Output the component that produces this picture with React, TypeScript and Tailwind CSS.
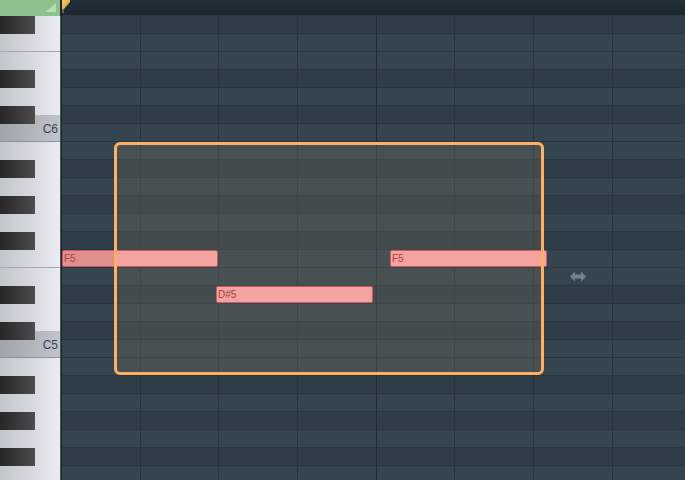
const ROWS = [
  'F#6', 'F6', 'E6', 'D#6', 'D6', 'C#6', 'C6', 'B5', 'A#5', 'A5', 'G#5', 'G5', 'F#5',
  'F5', 'E5', 'D#5', 'D5', 'C#5', 'C5', 'B4', 'A#4', 'A4', 'G#4', 'G4', 'F#4', 'F4',
]

const BEATS = [0, 1, 2, 3, 4, 5, 6, 7]

interface Note {
  name: string
  left: number
  top: number
  width: number
  bg: string
}

// grid origin is x=62, y=16 on the page
const NOTES: Note[] = [
  { name: 'F5', left: 0, top: 234, width: 156, bg: 'bg-[linear-gradient(to_right,#e08f8e_52px,#f5a3a0_52px)]' },
  { name: 'D#5', left: 154, top: 270, width: 157, bg: 'bg-[#f5a3a0]' },
  { name: 'F5', left: 328, top: 234, width: 157, bg: 'bg-[#f5a3a0]' },
]

function PianoKey({ name }: { name: string }) {
  const black = name.includes('#')
  const isC = name[0] === 'C' && !black
  const isCSharp = name.startsWith('C#')
  const isF = name[0] === 'F' && !black

  if (black) {
    return (
      <div className="flex h-[18px]">
        <div className="w-[35px] bg-linear-to-r from-[#262626] to-[#4d4d4f]" />
        <div className="flex flex-1 flex-col">
          <div className="flex-1" />
          <div className={isCSharp ? 'flex-1 bg-[rgba(30,35,45,0.2)]' : 'flex-1'} />
        </div>
      </div>
    )
  }

  return (
    <div
      className={`flex h-[18px] items-start ${
        isC ? 'border-b border-[#8d929a] bg-[rgba(30,35,45,0.2)]' : ''
      } ${isF ? 'border-b border-[#a4a9b1]' : ''}`}
    >
      {isC && (
        <span className="ml-auto -mt-[1px] pr-[2px] text-[12px] leading-none text-[#34455a]">
          {name}
        </span>
      )}
    </div>
  )
}

function GridRow({ name }: { name: string }) {
  const black = name.includes('#')
  return (
    <div
      className={`h-[18px] border-b border-[#28353d] ${
        black ? 'bg-[#2e3d47]' : 'bg-[#34454f]'
      }`}
    />
  )
}

export default function App() {
  return (
    <div className="flex h-[480px] w-[685px] flex-col overflow-hidden bg-[#2e3d47] font-['Liberation_Sans',Arial,sans-serif]">
      {/* top bar */}
      <div className="flex h-[16px] shrink-0">
        <div className="flex w-[60px] items-start justify-end bg-[#8cc18e] pr-[4px] pt-[3px]">
          <svg width="11" height="9" viewBox="0 0 11 9">
            <polygon points="0,9 11,9 11,0" fill="#b3ddb3" />
          </svg>
        </div>
        <div className="w-[2px] bg-[#1b2429]" />
        <div className="flex flex-1 items-start border-b border-[#2d3b43] bg-linear-to-b from-[#22303a] to-[#1b262d]">
          <svg width="9" height="14" viewBox="0 0 9 14">
            <defs>
              <linearGradient id="mk" x1="0" y1="0" x2="1" y2="1">
                <stop offset="0" stopColor="#f8cf66" />
                <stop offset="1" stopColor="#d98f2e" />
              </linearGradient>
            </defs>
            <polygon points="0,0 8,0 8,2 2,9 0,9" fill="url(#mk)" />
            <rect x="0.5" y="9" width="1" height="4" fill="#b99a62" />
          </svg>
        </div>
      </div>

      <div className="flex flex-1">
        {/* piano keys */}
        <div className="w-[60px] shrink-0 bg-linear-to-r from-[#c1c5cc] to-[#e9ecf2]">
          {ROWS.map((r) => (
            <PianoKey key={r} name={r} />
          ))}
        </div>
        <div className="flex w-[2px] shrink-0">
          <div className="w-[1px] bg-[#50565d]" />
          <div className="w-[1px] bg-[#1b2328]" />
        </div>

        {/* note grid */}
        <div className="relative flex-1 overflow-hidden">
          {ROWS.map((r) => (
            <GridRow key={r} name={r} />
          ))}

          <div className="absolute inset-0 flex">
            {BEATS.map((b) => (
              <div
                key={b}
                className={`h-full w-[78.67px] shrink-0 border-r ${
                  b === 3 ? 'border-[#1f2a31]' : 'border-[#27343c]'
                }`}
              />
            ))}
          </div>

          {/* selection fill */}
          <div className="absolute left-[52px] top-[126px] h-[233px] w-[430px] rounded-[6px] bg-[rgba(112,106,98,0.37)] bg-[repeating-conic-gradient(rgba(0,0,0,0.06)_0%_25%,transparent_0%_50%)] bg-[length:2px_2px]" />

          {NOTES.map((n, i) => (
            <div
              key={i}
              className={`absolute h-[17px] rounded-[2px] border border-[#c4605f] ${n.bg} pl-[1px] text-[10px] leading-[15px] text-[#a83f43]`}
              style={{ left: n.left, top: n.top, width: n.width }}
            >
              {n.name}
            </div>
          ))}

          {/* selection border */}
          <div className="absolute left-[52px] top-[126px] h-[233px] w-[430px] rounded-[6px] border-[3px] border-[#ffb062]" />

          {/* resize cursor */}
          <svg
            className="absolute left-[508px] top-[255px]"
            width="16"
            height="11"
            viewBox="0 0 16 11"
          >
            <polygon
              points="0,5.5 5,0.5 5,3.5 11,3.5 11,0.5 16,5.5 11,10.5 11,7.5 5,7.5 5,10.5"
              fill="#6f8290"
            />
          </svg>
        </div>
      </div>
    </div>
  )
}
